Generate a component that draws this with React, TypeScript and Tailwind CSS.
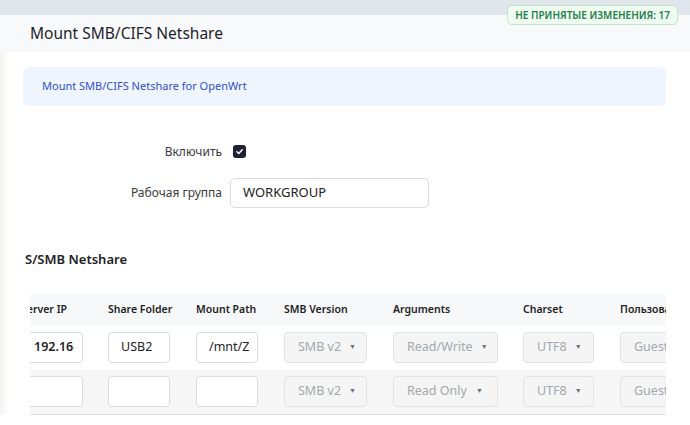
import React from "react";

const cols = [
  { label: "Server IP", w: "w-[87px]" },
  { label: "Share Folder", w: "w-[88px]" },
  { label: "Mount Path", w: "w-[88px]" },
  { label: "SMB Version", w: "w-[109px]" },
  { label: "Arguments", w: "w-[130px]" },
  { label: "Charset", w: "w-[97px]" },
  { label: "Пользователь", w: "w-[120px]" },
];

function TextBox({ value, bold }: { value?: string; bold?: boolean }) {
  return (
    <div className="w-[62px] h-[31px] rounded-[4px] border border-[#d9dbe0] bg-white pl-[12px] pr-[8px] flex items-center">
      <div
        className={`overflow-hidden whitespace-nowrap text-[12.5px] text-[#222] ${
          bold ? "font-semibold" : ""
        }`}
      >
        {value}
      </div>
    </div>
  );
}

function Select({ value, w }: { value: string; w: string }) {
  return (
    <div
      className={`${w} h-[31px] rounded-[4px] border border-[#e2e3e6] bg-[#f5f5f5] pl-[13px] pr-[14px] flex items-center justify-between gap-[8px] overflow-hidden whitespace-nowrap text-[12.5px] text-[#a3a7ae]`}
    >
      <span>{value}</span>
      <span className="text-[7px] text-[#6d717a] shrink-0">▼</span>
    </div>
  );
}

function Row({
  ip,
  folder,
  path,
  args,
  shaded,
}: {
  ip?: string;
  folder?: string;
  path?: string;
  args: string;
  shaded?: boolean;
}) {
  return (
    <div className={`flex items-center h-[44px] ${shaded ? "bg-[#f6f6f6]" : "bg-white"}`}>
      <div className="w-[87px] shrink-0">
        <TextBox value={ip} bold />
      </div>
      <div className="w-[88px] shrink-0">
        <TextBox value={folder} />
      </div>
      <div className="w-[88px] shrink-0">
        <TextBox value={path} />
      </div>
      <div className="w-[109px] shrink-0">
        <Select value="SMB v2" w="w-[83px]" />
      </div>
      <div className="w-[130px] shrink-0">
        <Select value={args} w="w-[105px]" />
      </div>
      <div className="w-[97px] shrink-0">
        <Select value="UTF8" w="w-[71px]" />
      </div>
      <div className="w-[120px] shrink-0">
        <Select value="Guest" w="w-[90px]" />
      </div>
    </div>
  );
}

export default function App() {
  return (
    <div
      className="relative w-[690px] h-[425px] overflow-hidden bg-white text-[#222]"
      style={{ fontFamily: '"Noto Sans", "Open Sans", sans-serif' }}
    >
      <div className="h-[15px] bg-[#e1e5ec]" />
      <div className="h-[37px] bg-[#f8f9fb] pl-[30px] flex items-center">
        <h1 className="text-[15.5px] text-[#1d1f2c]">Mount SMB/CIFS Netshare</h1>
      </div>

      <div className="absolute right-[12px] top-[5px] h-[20px] px-[7px] flex items-center rounded-[5px] border border-[#bfe6c7] bg-[#effbf1] text-[10px] font-semibold text-[#23804a]">
        НЕ ПРИНЯТЫЕ ИЗМЕНЕНИЯ: 17
      </div>

      <div className="flex">
        <div className="w-[8px] shrink-0 bg-gradient-to-r from-[#f3f3f1] to-white" />
        <div className="flex-1">
          <div className="mt-[15px] ml-[15px] w-[643px] h-[39px] rounded-[6px] bg-[#eef5ff] pl-[19px] flex items-center text-[11px] text-[#3450c8]">
            Mount SMB/CIFS Netshare for OpenWrt
          </div>

          <div className="mt-[39px] flex items-center h-[13px]">
            <div className="w-[214px] text-right text-[12px] text-[#3a3a3a]">Включить</div>
            <div className="ml-[11px] w-[13px] h-[13px] rounded-[3px] bg-[#1e2235] flex items-center justify-center">
              <svg viewBox="0 0 12 12" className="w-[9px] h-[9px]">
                <path d="M2.5 6.3 L5 8.6 L9.6 3.6" fill="none" stroke="white" strokeWidth="2" strokeLinecap="round" strokeLinejoin="round" />
              </svg>
            </div>
          </div>

          <div className="mt-[20px] flex items-center">
            <div className="w-[214px] text-right text-[12px] text-[#3a3a3a]">Рабочая группа</div>
            <div className="ml-[8px] w-[199px] h-[30px] rounded-[5px] border border-[#d9dbe0] pl-[12px] flex items-center text-[13px] text-[#222]">
              WORKGROUP
            </div>
          </div>

          <div className="mt-[42px] ml-[17px] text-[13px] font-semibold text-[#222]">S/SMB Netshare</div>

          <div className="mt-[24px] ml-[22px] w-[636px] overflow-hidden">
            <div className="-ml-[9px] w-[740px]">
              <div className="flex items-center h-[32px] bg-[#f7f8fa] text-[10.5px] font-semibold text-[#222]">
                {cols.map((c) => (
                  <div key={c.label} className={`${c.w} shrink-0 whitespace-nowrap`}>
                    {c.label}
                  </div>
                ))}
              </div>
              <Row ip="192.168.1.1" folder="USB2" path="/mnt/Z" args="Read/Write" />
              <Row args="Read Only" shaded />
              <div className="h-px bg-[#dcdcdc]" />
            </div>
          </div>
        </div>
      </div>
    </div>
  );
}
